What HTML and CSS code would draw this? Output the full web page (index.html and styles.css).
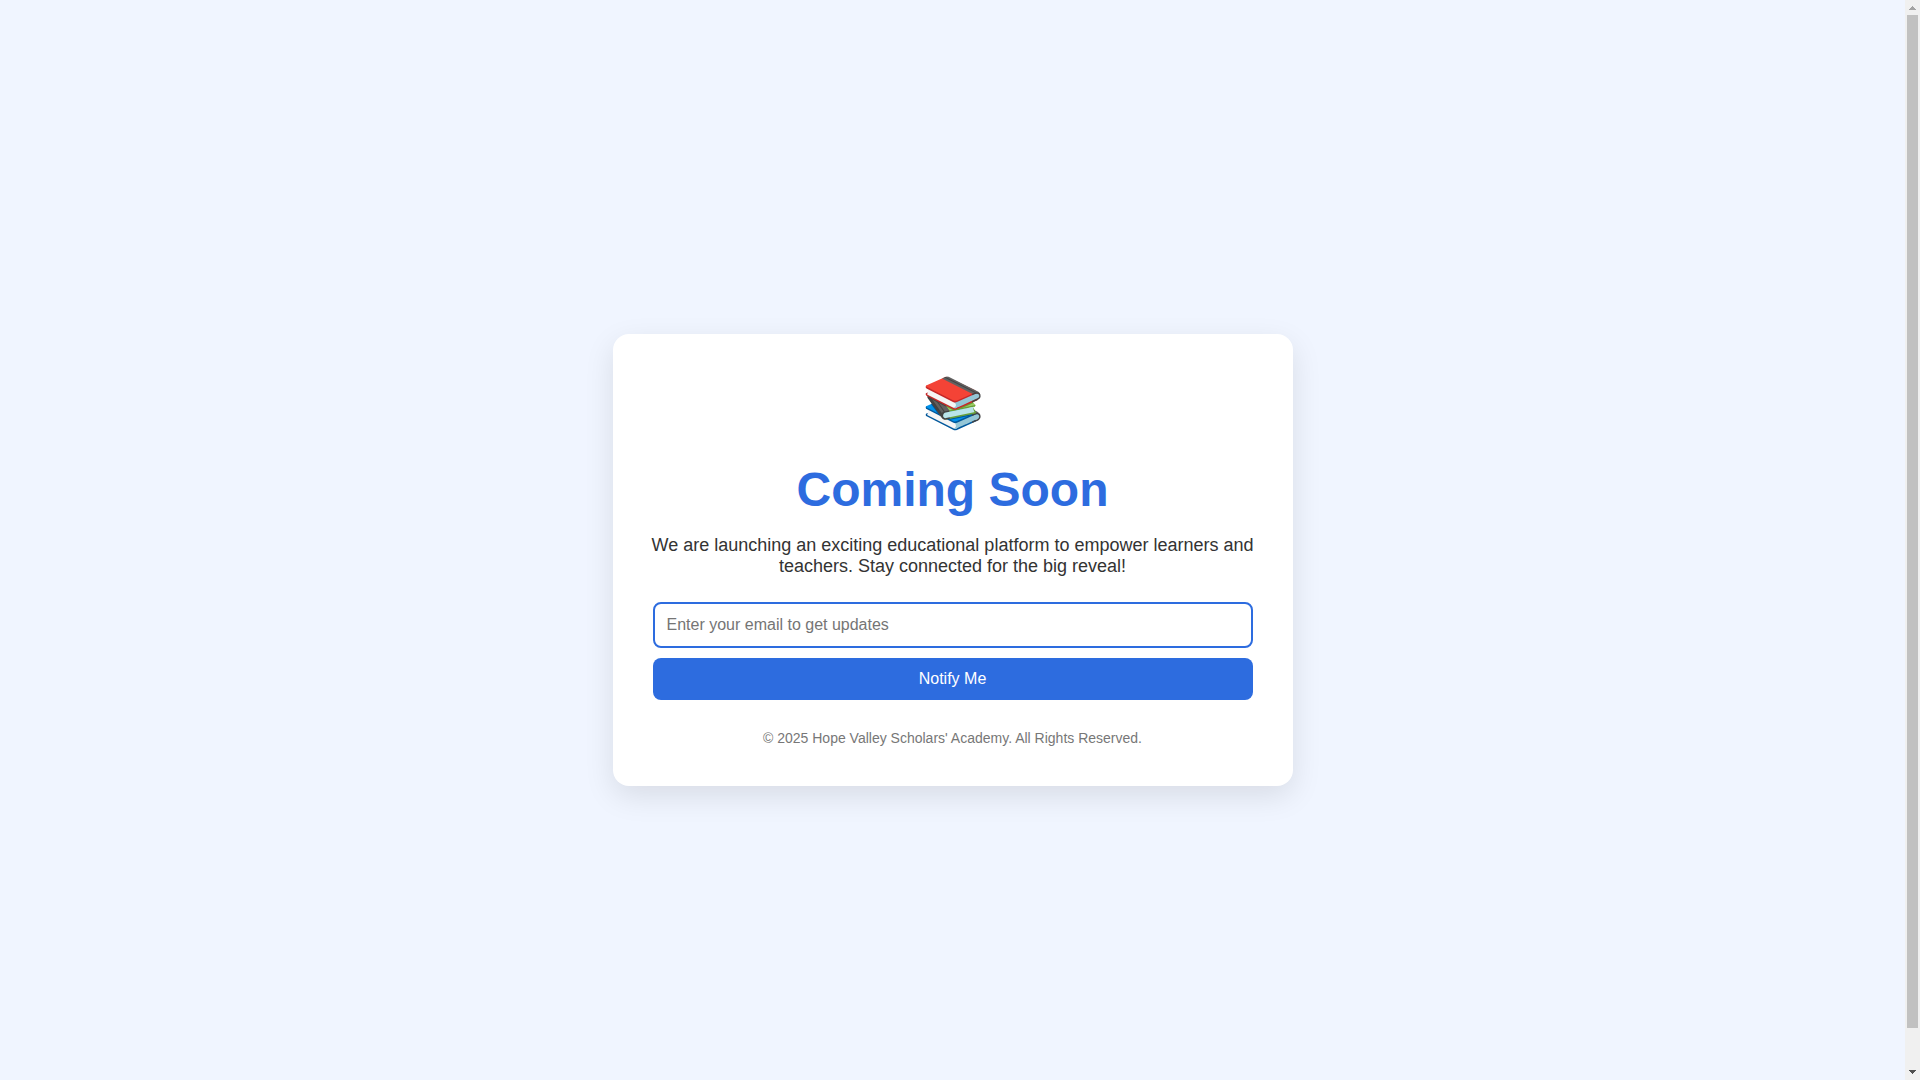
FILE: index.html
```
<!DOCTYPE html>
<html lang="en">
<head>
  <meta charset="UTF-8" />
  <meta name="viewport" content="width=device-width, initial-scale=1.0" />
  <title>Coming Soon</title>
  <link rel="stylesheet" href="styles.css">
</head>
<body>
  <main>
    <div class="container">
      <div class="icon">📚</div>
      <h1>Coming Soon</h1>
      <p>We are launching an exciting educational platform to empower learners and teachers. Stay connected for the big reveal!</p>
      <form>
        <input type="email" placeholder="Enter your email to get updates" aria-label="Email address" required />
        <button type="submit">Notify Me</button>
      </form>
      <footer>© 2025 Hope Valley Scholars' Academy. All Rights Reserved.</footer>
    </div>
  </main>

  <div class="scrollbar" aria-hidden="true">
    <svg class="arrow up" viewBox="0 0 15 15"><path d="M4 10 V9 H5 V8 H6 V7 H7 V6 H8 V7 H9 V8 H10 V9 H11 V10 Z" /></svg>
    <div class="track"><div class="thumb"></div></div>
    <svg class="arrow down" viewBox="0 0 15 15"><path d="M4 5 V6 H5 V7 H6 V8 H7 V9 H8 V8 H9 V7 H10 V6 H11 V5 Z" /></svg>
  </div>
</body>
</html>
```
FILE: styles.css
```
html {
  scrollbar-width: none;
}

body {
  margin: 0;
  font-family: "Liberation Sans", Arial, sans-serif;
  background: #f0f5ff;
  color: #333;
  display: grid;
  grid-template-columns: 1fr 15px;
}

main {
  display: flex;
  justify-content: center;
  align-items: center;
  min-height: 100vh;
  padding: 20px;
}

.container {
  background: #fff;
  padding: 40px;
  border-radius: 16px;
  max-width: 600px;
  text-align: center;
  box-shadow: 0 10px 30px rgba(0, 0, 0, 0.1);
}

.icon {
  font-size: 50px;
  line-height: 58px;
  margin-bottom: 30px;
}

h1 {
  font-size: 48px;
  color: #2d6cdf;
  margin: 0 0 18px;
}

p {
  font-size: 18px;
  margin: 0 -8px 25px;
}

form {
  display: flex;
  flex-direction: column;
  gap: 10px;
}

input[type="email"] {
  padding: 12px;
  border: 2px solid #2d6cdf;
  border-radius: 8px;
  font-family: inherit;
  font-size: 16px;
}

button {
  padding: 12px;
  font-family: inherit;
  font-size: 16px;
  background: #2d6cdf;
  color: #fff;
  border: none;
  border-radius: 8px;
  cursor: pointer;
}

footer {
  margin-top: 30px;
  font-size: 14px;
  color: #777;
}

.scrollbar {
  position: sticky;
  top: 0;
  height: 100vh;
  display: flex;
  flex-direction: column;
  background: #f0f0f0;
}

.arrow {
  height: 15px;
  fill: #a3a3a3;
}

.arrow.down {
  fill: #505050;
}

.track {
  flex: 1;
  padding: 0 2px;
}

.thumb {
  height: 96.5%;
  background: #c1c1c1;
}
```
